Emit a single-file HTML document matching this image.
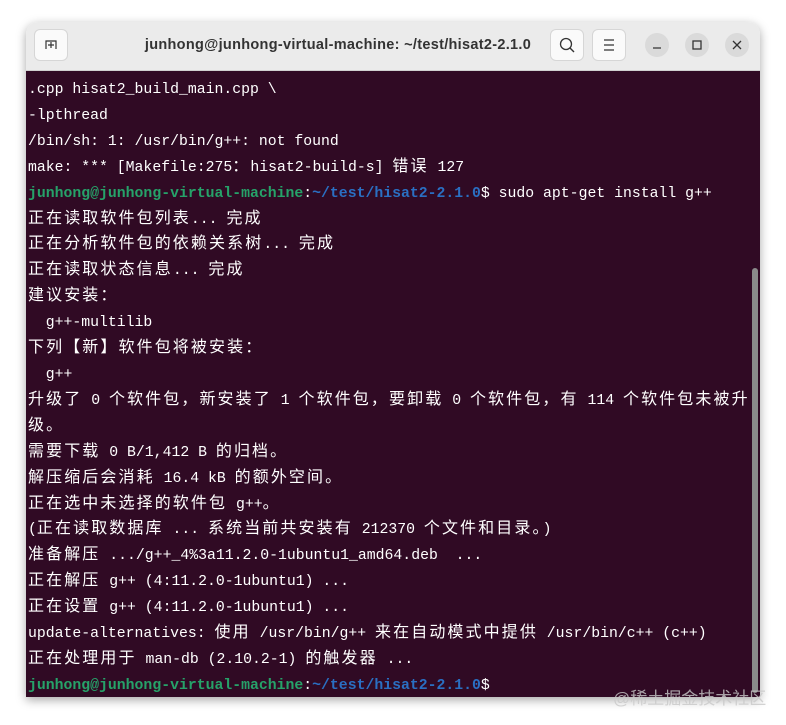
<!DOCTYPE html>
<html><head><meta charset="utf-8"><style>
body{margin:0;width:786px;height:725px;background:#fff;position:relative;overflow:hidden;font-family:"Liberation Sans","Noto Sans CJK SC",sans-serif}
.win{position:absolute;left:26px;top:22px;width:734px;height:675px;border-radius:12px 12px 0 0;overflow:hidden;box-shadow:0 3px 10px rgba(0,0,0,.35)}
.tb{height:48px;background:#ebebeb;border-bottom:1px solid #d0d0d0;position:relative}
.title{position:absolute;left:0;right:110px;top:15px;text-align:center;font-weight:bold;font-size:14.5px;letter-spacing:0.3px;color:#333;white-space:nowrap}
.btn{position:absolute;top:7px;width:34px;height:32px;background:#fafafa;border:1px solid #d6d6d6;border-radius:6px;box-sizing:border-box}
.circ{position:absolute;top:11px;width:24px;height:24px;border-radius:50%;background:#dadada}
.body{position:absolute;top:49px;left:0;right:0;bottom:0;background:#300a24}
.t{position:absolute;left:2px;top:7px;font-family:"Liberation Mono","Noto Sans CJK SC",monospace;font-size:14.8px;color:#fff;white-space:pre;line-height:25.9px}
.c{font-family:"Noto Sans CJK SC",sans-serif;font-size:16px;letter-spacing:2.1px;line-height:10px}
.g{color:#26a269;font-weight:bold}.b{color:#2a6fc2;font-weight:bold}
.sb{position:absolute;right:2px;top:197px;width:6px;height:425px;background:#8a8a8a;border-radius:3px}
.wm{position:absolute;left:613px;top:684px;font-size:17px;color:rgba(200,200,200,.8)}
</style></head><body>
<div class="win">
<div class="tb">
<div class="btn" style="left:8px"><svg width="34" height="32" style="position:absolute;left:-1px;top:-1px"><path d="M12 20v-8h10v8M17 13v6M14 16h6" stroke="#333" stroke-width="1.2" fill="none"/></svg></div>
<div class="title">junhong@junhong-virtual-machine: ~/test/hisat2-2.1.0</div>
<div class="btn" style="left:524px"><svg width="34" height="32" style="position:absolute;left:-1px;top:-1px"><circle cx="16" cy="15" r="5.5" stroke="#333" stroke-width="1.3" fill="none"/><path d="M20 19l4 4" stroke="#333" stroke-width="1.4"/></svg></div>
<div class="btn" style="left:566px"><svg width="34" height="32" style="position:absolute;left:-1px;top:-1px"><path d="M12 11h10M12 16h10M12 21h10" stroke="#333" stroke-width="1.2"/></svg></div>
<div class="circ" style="left:619px"><svg width="24" height="24"><path d="M8 15h8" stroke="#333" stroke-width="1.3"/></svg></div>
<div class="circ" style="left:659px"><svg width="24" height="24"><rect x="8" y="8" width="8" height="8" stroke="#333" stroke-width="1.3" fill="none"/></svg></div>
<div class="circ" style="left:699px"><svg width="24" height="24"><path d="M8 8l8 8M16 8l-8 8" stroke="#333" stroke-width="1.3"/></svg></div>
</div>
<div class="body">
<div class="t">.cpp hisat2_build_main.cpp \
-lpthread
/bin/sh: 1: /usr/bin/g++: not found
make: *** [Makefile:275<span class="c">：</span>hisat2-build-s] <span class="c">错误</span> 127
<span class="g">junhong@junhong-virtual-machine</span>:<span class="b">~/test/hisat2-2.1.0</span>$ sudo apt-get install g++
<span class="c">正在读取软件包列表</span>... <span class="c">完成</span>
<span class="c">正在分析软件包的依赖关系树</span>... <span class="c">完成</span>
<span class="c">正在读取状态信息</span>... <span class="c">完成</span>
<span class="c">建议安装：</span>
  g++-multilib
<span class="c">下列【新】软件包将被安装：</span>
  g++
<span class="c">升级了</span> 0 <span class="c">个软件包，新安装了</span> 1 <span class="c">个软件包，要卸载</span> 0 <span class="c">个软件包，有</span> 114 <span class="c">个软件包未被升</span>
<span class="c">级。</span>
<span class="c">需要下载</span> 0 B/1,412 B <span class="c">的归档。</span>
<span class="c">解压缩后会消耗</span> 16.4 kB <span class="c">的额外空间。</span>
<span class="c">正在选中未选择的软件包</span> g++<span class="c">。</span>
(<span class="c">正在读取数据库</span> ... <span class="c">系统当前共安装有</span> 212370 <span class="c">个文件和目录。</span>)
<span class="c">准备解压</span> .../g++_4%3a11.2.0-1ubuntu1_amd64.deb  ...
<span class="c">正在解压</span> g++ (4:11.2.0-1ubuntu1) ...
<span class="c">正在设置</span> g++ (4:11.2.0-1ubuntu1) ...
update-alternatives: <span class="c">使用</span> /usr/bin/g++ <span class="c">来在自动模式中提供</span> /usr/bin/c++ (c++)
<span class="c">正在处理用于</span> man-db (2.10.2-1) <span class="c">的触发器</span> ...
<span class="g">junhong@junhong-virtual-machine</span>:<span class="b">~/test/hisat2-2.1.0</span>$</div>
<div class="sb"></div>
</div>
</div>
<div class="wm">@稀土掘金技术社区</div>
</body></html>
